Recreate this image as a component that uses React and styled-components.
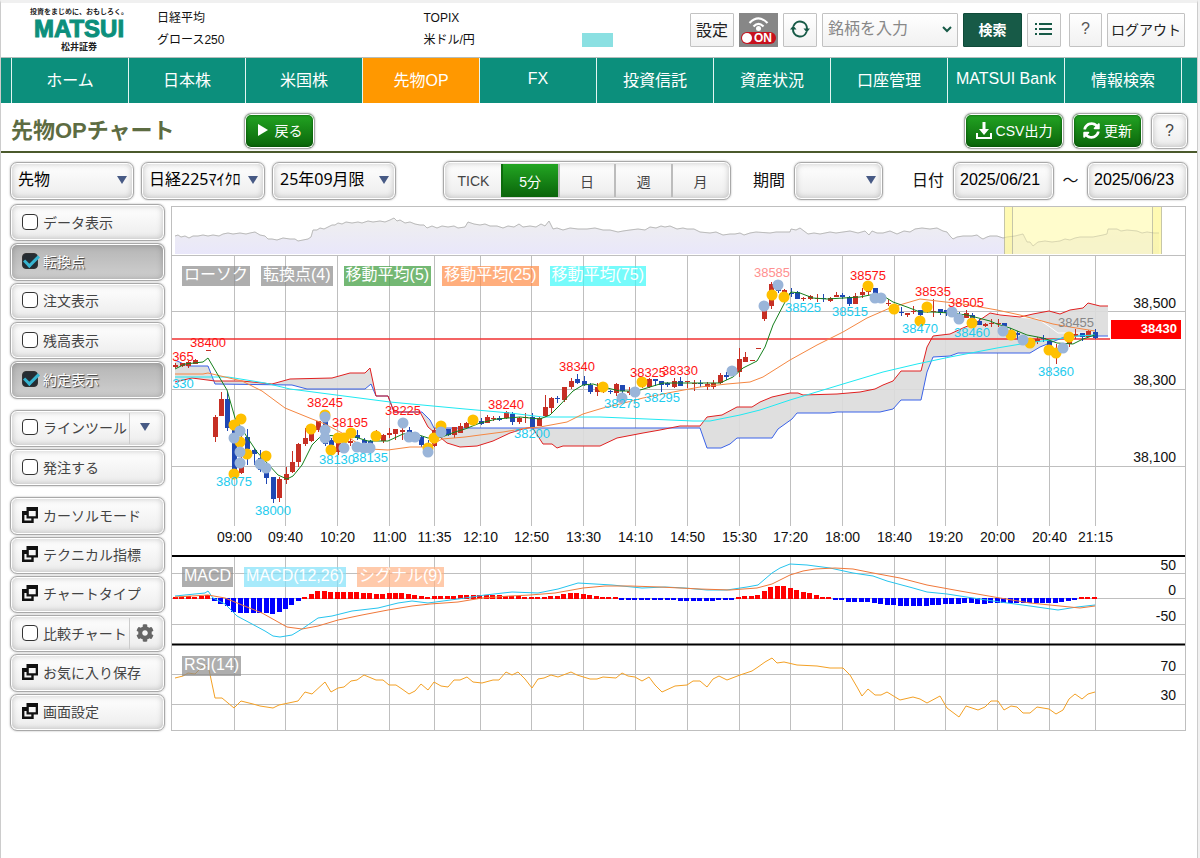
import React from 'react';
import styled, { createGlobalStyle, css } from 'styled-components';
import { FaCog, FaSyncAlt } from 'react-icons/fa';

const GREEN = '#0c8f7c';
const DARK_GREEN = '#175a47';
const FONT = `"Liberation Sans", "Noto Sans CJK JP", sans-serif`;
const UI_FONT = `"Noto Sans", "Noto Sans CJK JP", sans-serif`;

const GlobalStyle = createGlobalStyle`
    * {
        box-sizing: border-box;
    }
    body {
        margin: 0;
        background: #f1f1f1;
        color: #111;
        font-family: ${FONT};
    }
    button, input, select {
        margin: 0;
        font-family: inherit;
    }
    button, label, select {
        cursor: pointer;
    }
`;

const Page = styled.div`
    min-height: 100vh;
    margin-right: 2px;
    border: 1px solid #ccc;
    border-width: 3px 1px 0;
    border-top-color: #f0f0f0;
    background: #fff;
`;

/* ---------- header ---------- */

const HeaderSt = styled.header`
    height: 54px;
    padding: 0 12px 0 29px;
    display: flex;
    align-items: center;
`;

const Logo = styled.a`
    width: 98px;
    margin-right: 29px;
    display: flex;
    flex-direction: column;
    align-items: center;
    color: #222;
    text-decoration: none;
    white-space: nowrap;
    small {
        font-size: 7px;
        font-weight: bold;
        line-height: 8px;
    }
    strong {
        font-size: 24px;
        line-height: 26px;
        color: ${GREEN};
        -webkit-text-stroke: 1px ${GREEN};
    }
    span {
        font-size: 9px;
        font-weight: bold;
        line-height: 10px;
    }
`;

const Quotes = styled.dl`
    flex: 1;
    margin: 0;
    padding-bottom: 2px;
    display: grid;
    grid-template-columns: 1fr 1fr;
    font-size: 12px;
    line-height: 22px;
    div {
        display: flex;
        align-items: center;
    }
    dt {
        width: 158px;
    }
    dd {
        margin: 0;
    }
`;

const Flash = styled.span`
    display: block;
    width: 31px;
    height: 14px;
    background: #8be0e2;
`;

const Actions = styled.div`
    display: flex;
    gap: 5px;
    color: #222;
`;

const boxStyle = css`
    height: 34px;
    border: 1px solid #c2c2c2;
    border-radius: 1px;
    background: linear-gradient(#fff, #f1f1f1);
    color: #222;
`;

const FlatButton = styled.button`
    ${boxStyle}
    width: ${({ $width }) => $width}px;
    padding: 0 0 2px;
    display: flex;
    justify-content: center;
    align-items: center;
    font-size: ${({ $size }) => $size || 16}px;
    white-space: nowrap;
    ${({ $dark }) =>
        $dark &&
        css`
            border-color: #0f4a39;
            background: ${DARK_GREEN};
            color: #fff;
            font-weight: bold;
        `}
    ${({ $plain }) =>
        $plain &&
        css`
            padding: 0;
            border: none;
            background: none;
        `}
`;

const Search = styled.label`
    ${boxStyle}
    width: 136px;
    padding: 0 5px 2px;
    display: flex;
    align-items: center;
    input {
        flex: 1;
        min-width: 0;
        padding: 0;
        border: none;
        outline: none;
        background: none;
        font-size: 16px;
        &::placeholder {
            color: #888;
        }
    }
`;

const HelpButton = styled(FlatButton)`
    margin-left: 3px;
    color: #555;
`;

/* ---------- navigation ---------- */

const Navbar = styled.nav`
    height: 46px;
    padding: 0 15px 0 10px;
    display: flex;
    border-top: 1px solid #b5bdbb;
    background: ${GREEN};
`;

const NavItem = styled.a`
    flex: 1;
    padding-bottom: 4px;
    border-left: 1px solid #e4f5f2;
    display: flex;
    justify-content: center;
    align-items: center;
    background: ${({ $active }) => ($active ? '#ff9800' : GREEN)};
    color: #fff;
    font-size: 16px;
    text-decoration: none;
    white-space: nowrap;
    &:last-child {
        border-right: 1px solid #e4f5f2;
    }
`;

/* ---------- title bar ---------- */

const TitleBar = styled.div`
    height: 50px;
    padding: 10px 9px 0 10px;
    display: flex;
    align-items: flex-start;
    gap: 8px;
    border-bottom: 2px solid #4b5a2c;
    h1 {
        width: 225px;
        margin: 0;
        color: #5d6c42;
        font-size: 22px;
        line-height: 36px;
    }
`;

const Spacer = styled.div`
    flex: 1;
`;

const raised = css`
    border: 1px solid #a9a9a9;
    border-radius: 7px;
    background: linear-gradient(#fff, #ececec);
    box-shadow: inset 0 0 0 1px #fff, inset 0 0 6px 1px rgba(0, 0, 0, 0.22), 0 0 2px #aaa;
`;

const GreenButton = styled.button`
    height: 36px;
    width: ${({ $width }) => $width}px;
    padding: 0 0 2px;
    display: flex;
    justify-content: center;
    align-items: center;
    gap: 4px;
    border: 1px solid #a9a9a9;
    border-radius: 7px;
    background: linear-gradient(#23a523, #0a640a);
    box-shadow: inset 0 0 0 1px #fff, inset 0 0 2px 2px rgba(0, 60, 0, 0.4), 0 0 2px #aaa;
    color: #fff;
    font-size: 14px;
    white-space: nowrap;
`;

const GrayButton = styled.button`
    ${raised}
    width: 37px;
    height: 36px;
    padding: 0;
    color: #444;
    font-size: 16px;
`;

/* ---------- chart conditions ---------- */

const Conditions = styled.form`
    padding: 8px 9px 0;
    display: flex;
    align-items: center;
    font-family: ${UI_FONT};
    font-size: 16px;
`;

const SelectWrap = styled.span`
    position: relative;
    width: ${({ $width }) => $width}px;
    margin-right: 7px;
    select {
        ${raised}
        appearance: none;
        width: 100%;
        height: 38px;
        padding: 0 0 3px 7px;
        color: #000;
        font-size: 16px;
    }
`;

const Caret = styled.i`
    width: 0;
    height: 0;
    border: 5px solid transparent;
    border-top: 8px solid #475a85;
    border-bottom: none;
`;

const SelectCaret = styled(Caret)`
    position: absolute;
    right: 7px;
    top: 14px;
    pointer-events: none;
`;

const Segments = styled.div`
    ${raised}
    height: 39px;
    width: 288px;
    margin-left: 40px;
    padding: 2px;
    display: flex;
    overflow: hidden;
`;

const Segment = styled.button`
    flex: 1;
    padding: 0;
    border: none;
    border-left: 2px solid #bcbcbc;
    background: none;
    color: #444;
    font-family: ${FONT};
    font-size: 14px;
    &:first-child {
        border-left: none;
    }
    ${({ $active }) =>
        $active &&
        css`
            border-color: #0d6b0d;
            background: linear-gradient(#23a523, #0a640a);
            color: #fff;
        `}
`;

const Caption = styled.label`
    margin: 0 9px 0 ${({ $left }) => $left}px;
    padding-bottom: 3px;
`;

const DateInput = styled.input`
    ${raised}
    width: 101px;
    height: 38px;
    padding: 0 0 2px 6px;
    color: #000;
    font-family: ${FONT};
    font-size: 16px;
`;

const Tilde = styled.span`
    width: 33px;
    padding-bottom: 3px;
    text-align: center;
`;

/* ---------- side menu ---------- */

const Body = styled.main`
    padding: 4px 11px 0 9px;
    display: flex;
    gap: 6px;
`;

const Side = styled.aside`
    width: 155px;
    display: flex;
    flex-direction: column;
    gap: 2px;
`;

const SideRow = styled.div`
    ${raised}
    flex: 1;
    min-height: 34px;
    margin-top: ${({ $first }) => ($first ? 9 : 0)}px;
    display: flex;
    align-items: stretch;
    color: #444;
    font-family: ${UI_FONT};
    font-size: 14px;
    white-space: nowrap;
    ${({ $active }) =>
        $active &&
        css`
            background: linear-gradient(#b4b4b4, #d0d0d0);
            color: #fff;
            text-shadow: 1px 1px 1px #333;
        `}
`;

const Check = styled.label`
    flex: 1;
    padding: 0 0 2px 11px;
    display: flex;
    align-items: center;
    gap: 5px;
`;

const CheckInput = styled.input`
    appearance: none;
    width: 16px;
    height: 16px;
    border: 1px solid #333;
    border-radius: 4px;
    background: #fff;
    display: grid;
    place-items: center;
    &:checked {
        background: #252d33;
    }
    &:checked::after {
        content: '';
        width: 6px;
        height: 12px;
        border: solid #37b4d0;
        border-width: 0 3px 3px 0;
        transform: translate(1px, -2px) rotate(45deg);
    }
`;

const SideButton = styled.button`
    flex: 1;
    padding: 0 0 2px 11px;
    display: flex;
    align-items: center;
    gap: 5px;
    border: none;
    background: none;
    color: inherit;
    font-size: 14px;
`;

const SideExtra = styled.button`
    width: 35px;
    margin: 2px 0;
    padding: 0 4px 2px 0;
    display: flex;
    justify-content: center;
    align-items: center;
    border: none;
    border-left: 1px solid #ccc;
    background: none;
    color: #666;
`;

/* ---------- chart ---------- */

const ChartBox = styled.section`
    position: relative;
    flex: 1;
    min-width: 0;
    margin-top: 2px;
    svg {
        display: block;
        width: 100%;
    }
`;

const Legend = styled.div`
    position: absolute;
    left: 11px;
    top: ${({ $top }) => $top}px;
    display: flex;
    gap: 11px;
`;

const Chip = styled.span`
    height: 20px;
    padding: 0 2px;
    background: ${({ $color }) => $color};
    color: #fff;
    font-size: 16px;
    line-height: 18px;
`;

const navItems = ['ホーム', '日本株', '米国株', '先物OP', 'FX', '投資信託', '資産状況', '口座管理', 'MATSUI Bank', '情報検索'];

const sideItems = [
    { label: 'データ表示', check: true },
    { label: '転換点', check: true, on: true },
    { label: '注文表示', check: true },
    { label: '残高表示', check: true },
    { label: '約定表示', check: true, on: true },
    { label: 'ラインツール', check: true, first: true, extra: 'caret' },
    { label: '発注する', check: true },
    { label: 'カーソルモード', first: true },
    { label: 'テクニカル指標' },
    { label: 'チャートタイプ' },
    { label: '比較チャート', check: true, extra: 'gear' },
    { label: 'お気に入り保存' },
    { label: '画面設定' },
];

const times = [
    [234.5, '09:00'], [285.5, '09:40'], [337.5, '10:20'], [389.5, '11:00'], [434.5, '11:35'], [480.5, '12:10'],
    [531.5, '12:50'], [583.5, '13:30'], [635.5, '14:10'], [687.5, '14:50'], [739.5, '15:30'], [790.5, '17:20'],
    [842.5, '18:00'], [894.5, '18:40'], [945.5, '19:20'], [997.5, '20:00'], [1049.5, '20:40'], [1095.5, '21:15'],
];

const gridRows = [311.5, 389.5, 466.5, 573.5, 598.5, 624.5, 674.5, 704.5];

const scale = [
    [308, '38,500'], [385, '38,300'], [462, '38,100'],
    [570, '50'], [595, '0'], [621, '-50'], [671, '70'], [700, '30'],
];

const overview =
    '175,236 178,235 181,237 185,236 189,238 193,236 198,236 203,235 208,236 213,235 219,236 223,234 228,233 233,234 240,233 246,234 250,233 255,232 260,235 265,236 268,239 272,239 277,240 283,238 290,239 295,239 298,241 303,240 308,239 311,237 313,230 317,230 320,228 324,229 328,227 332,225 335,225 338,223 342,224 346,222 352,223 358,222 362,223 368,221 373,222 380,221 385,222 390,220 394,218 397,221 400,220 405,223 410,222 415,224 420,225 424,225 427,228 432,226 437,228 442,226 448,227 454,226 458,228 465,227 468,222 474,224 480,225 485,224 490,226 497,226 503,228 508,226 514,227 519,224 523,227 530,226 536,227 541,224 545,226 549,221 553,229 557,228 563,230 570,228 578,229 587,229 595,228 603,230 610,230 618,232 623,231 630,230 638,229 645,230 650,227 656,228 661,226 665,227 670,226 677,229 683,228 687,229 694,229 700,232 710,233 716,232 723,235 730,234 735,234 740,233 744,235 750,233 756,232 770,233 776,232 790,232 791,229 796,230 800,228 804,231 808,234 814,233 820,234 830,232 836,233 843,232 850,231 858,233 865,231 869,235 872,231 877,233 883,233 890,231 897,234 904,231 910,232 915,229 922,228 930,229 937,228 943,231 947,232 950,236 953,239 957,237 963,236 972,236 977,235 981,238 983,239 987,237 990,236 997,236 1003,238 1007,237 1015,236 1023,234 1027,242 1030,242 1033,246 1038,242 1045,241 1052,242 1060,241 1065,239 1070,240 1075,238 1080,237 1093,237 1103,235 1107,234 1108,229 1117,229 1121,231 1127,230 1137,231 1142,233 1147,232 1154,233 1159,233';

const ma5 =
    '175,369 185,364 203,362 208,358 215,370 227,390 235,418 247,437 257,452 268,464 278,475 287,479 293,476 302,465 312,445 322,435 338,436 355,437 368,441 388,441 403,434 413,433 428,438 442,437 455,432 465,429 480,423 497,419 520,417 540,419 550,415 560,405 573,391 583,385 593,384 603,387 620,391 637,391 650,387 663,383 687,383 707,383 720,383 733,377 743,368 753,363 757,361 765,347 773,325 785,302 791,292 800,293 813,298 827,299 860,297 870,295 885,297 893,302 907,307 920,312 933,312 950,313 967,315 990,321 997,324 1010,328 1027,335 1043,338 1057,343 1073,344 1083,339 1095,335';

const ma25 =
    '175,374 203,374 208,373 225,377 242,381 262,391 285,408 312,419 325,424 342,433 357,443 370,449 388,450 410,447 428,447 442,439 465,437 480,435 503,432 527,428 540,427 567,422 583,414 603,408 620,404 643,398 673,392 700,387 727,384 750,382 763,377 790,360 817,345 843,332 867,318 890,308 903,304 920,299 937,301 963,304 980,307 997,310 1020,315 1053,324 1070,327 1095,331';

const ma75 =
    '175,377 228,377 265,383 290,389 390,402 465,409 510,413 543,417 600,417 647,419 693,421 710,421 740,415 760,410 790,400 843,384 883,372 917,364 950,357 997,348 1027,343 1050,340 1077,336 1095,335';

const spanA =
    '175,382 192,378 215,381 242,381 272,384 290,379 332,378 350,373 365,373 370,368 376,396 388,396 394,412 420,412 428,427 435,433 447,443 460,447 477,446 493,441 510,433 523,429 532,427 543,444 552,444 557,448 563,446 600,446 617,438 643,433 660,430 680,426 700,426 707,417 722,415 737,407 752,407 760,402 772,397 790,393 798,393 803,395 837,394 860,392 875,389 883,385 893,381 901,371 921,371 927,347 933,336 950,334 963,328 977,322 990,313 1000,315 1020,317 1033,314 1049,311 1060,314 1070,310 1083,308 1088,303 1100,306 1108,306';

const spanB =
    '175,360 188,366 208,366 215,384 292,385 307,389 365,389 371,384 376,396 388,396 394,412 422,412 430,420 434,428 465,428 700,428 707,448 721,448 730,444 737,438 772,438 778,429 792,419 797,413 830,413 837,412 880,412 893,409 901,400 921,400 927,372 933,357 950,356 958,353 1030,353 1040,347 1057,340 1067,336 1108,336';

const macdLine =
    '175,596 205,593 208,591 213,598 225,604 237,616 252,624 265,631 273,636 280,637 292,635 302,629 318,618 332,616 352,611 378,608 398,603 412,601 428,603 458,599 485,595 512,592 538,593 558,589 578,583 595,584 612,585 642,588 665,587 685,588 707,590 727,590 747,587 758,585 772,573 780,568 790,564 807,565 830,568 853,573 873,576 887,581 913,588 927,592 947,594 973,598 1000,602 1030,606 1058,610 1077,607 1095,605';

const signalLine =
    '175,597 208,595 225,598 242,605 262,613 287,627 302,629 318,626 338,620 362,615 388,610 412,606 430,604 458,602 482,598 510,596 530,595 555,593 572,590 583,588 605,586 630,586 660,587 700,589 730,590 757,588 772,584 790,575 803,571 815,569 835,568 853,569 873,573 900,578 927,585 960,591 1000,598 1030,603 1060,606 1080,608 1095,606';

const rsiLine =
    '175,678 183,676 188,673 195,674 202,667 208,665 215,698 222,698 234,708 241,701 253,704 260,706 273,708 279,705 298,701 305,692 312,694 325,682 331,692 338,688 344,687 351,681 357,680 364,675 376,680 383,680 389,685 396,685 402,689 409,694 415,691 421,684 428,690 434,682 441,686 448,687 454,680 460,680 467,677 473,682 482,683 493,680 499,680 506,672 512,675 518,672 525,679 532,688 538,679 544,678 551,675 558,677 571,672 577,675 590,679 597,679 603,677 616,678 622,673 628,676 635,677 642,681 649,677 655,685 662,692 675,686 687,685 693,681 700,681 707,687 713,679 719,676 727,680 740,675 752,671 758,667 765,662 772,658 777,663 784,662 797,665 817,666 830,668 843,668 850,675 857,687 862,696 868,689 875,695 881,695 887,692 900,700 913,697 920,699 927,703 940,696 947,708 959,717 966,706 978,710 985,707 991,701 998,701 1004,710 1011,706 1017,707 1023,713 1030,713 1037,707 1049,709 1056,714 1063,710 1069,699 1075,694 1082,699 1088,694 1095,692';

// x, high, body top, body bottom, low, rising
const candles = [
    [175, 363, 365, 367, 368, 1], [182, 363, 363, 366, 367, 1], [188, 361, 362, 366, 368, 1], [195, 359, 360, 364, 364, 1],
    [208, 350, 350, 351, 351, 1], [215, 415, 417, 437, 442, 1], [221, 392, 399, 416, 416, 1], [227, 392, 399, 428, 431, 0],
    [234, 420, 424, 472, 475, 0], [241, 432, 465, 473, 474, 1], [247, 429, 437, 449, 465, 0], [254, 448, 450, 454, 465, 0],
    [260, 450, 458, 470, 472, 0], [266, 462, 467, 478, 484, 0], [273, 477, 477, 499, 503, 0], [279, 477, 479, 498, 502, 1],
    [286, 467, 474, 480, 484, 1], [292, 451, 462, 472, 473, 1], [298, 443, 444, 462, 467, 1], [305, 428, 438, 444, 446, 1],
    [311, 430, 433, 441, 442, 1], [318, 421, 421, 430, 432, 1], [325, 413, 418, 444, 446, 0], [331, 438, 440, 445, 447, 0],
    [338, 442, 443, 452, 455, 1], [344, 440, 446, 449, 450, 1], [350, 434, 441, 443, 446, 1], [357, 430, 435, 438, 440, 0],
    [364, 438, 440, 443, 446, 0], [370, 440, 441, 444, 446, 0], [376, 430, 434, 440, 441, 1], [383, 434, 435, 441, 443, 1],
    [389, 428, 433, 435, 438, 1], [395, 429, 429, 434, 440, 1], [402, 425, 430, 432, 440, 1], [409, 427, 430, 434, 435, 0],
    [415, 433, 435, 438, 440, 0], [421, 436, 437, 445, 447, 0], [428, 440, 445, 450, 452, 0], [434, 428, 430, 446, 447, 1],
    [441, 428, 430, 434, 435, 0], [448, 429, 429, 435, 436, 0], [454, 427, 427, 435, 438, 1], [460, 423, 426, 433, 433, 1],
    [466, 422, 423, 428, 428, 1], [474, 418, 420, 423, 424, 0], [481, 418, 421, 424, 425, 0], [487, 415, 417, 423, 423, 1],
    [493, 416, 418, 419, 421, 1], [499, 416, 418, 420, 421, 0], [506, 411, 412, 418, 419, 1], [512, 412, 414, 422, 425, 0],
    [519, 417, 418, 422, 424, 1], [525, 413, 417, 418, 423, 1], [532, 413, 417, 428, 428, 0], [539, 417, 418, 426, 426, 1],
    [545, 395, 407, 416, 417, 1], [551, 397, 398, 408, 413, 1], [557, 396, 398, 399, 403, 0], [564, 387, 387, 400, 402, 1],
    [571, 378, 381, 387, 389, 1], [577, 374, 379, 383, 384, 0], [584, 376, 381, 385, 386, 0], [590, 383, 385, 392, 394, 0],
    [597, 383, 387, 392, 396, 1], [603, 386, 388, 391, 393, 1], [610, 390, 391, 392, 394, 0], [616, 383, 384, 393, 396, 1],
    [622, 385, 385, 391, 394, 0], [629, 387, 391, 393, 395, 1], [635, 388, 389, 393, 395, 0], [642, 380, 382, 386, 388, 1],
    [649, 378, 379, 387, 388, 1], [655, 379, 379, 381, 386, 0], [661, 381, 381, 385, 392, 0], [667, 382, 383, 385, 387, 0],
    [674, 378, 381, 387, 388, 1], [680, 377, 381, 386, 386, 0], [687, 381, 381, 382, 388, 1], [694, 380, 383, 384, 391, 1],
    [700, 380, 383, 384, 387, 0], [707, 382, 384, 387, 390, 1], [713, 380, 383, 387, 389, 1], [720, 373, 375, 383, 384, 1],
    [726, 372, 375, 377, 380, 0], [732, 367, 369, 373, 375, 0], [739, 348, 359, 372, 377, 1], [745, 352, 357, 362, 362, 1],
    [752, 360, 360, 361, 361, 1], [758, 348, 348, 349, 349, 1], [764, 306, 309, 319, 321, 1], [771, 282, 284, 306, 309, 1],
    [778, 282, 284, 291, 293, 0], [784, 289, 290, 293, 295, 1], [791, 288, 293, 294, 297, 0], [797, 291, 292, 299, 299, 0],
    [803, 297, 298, 299, 301, 1], [810, 295, 296, 299, 300, 1], [817, 294, 298, 299, 302, 1], [823, 294, 298, 299, 302, 0],
    [830, 297, 298, 301, 302, 1], [836, 292, 295, 297, 297, 1], [842, 293, 295, 297, 299, 0], [849, 296, 297, 304, 306, 0],
    [855, 293, 296, 304, 304, 1], [862, 288, 292, 295, 298, 1], [868, 285, 287, 292, 295, 1], [875, 288, 288, 294, 296, 0],
    [881, 294, 296, 300, 301, 0], [888, 299, 303, 304, 306, 1], [894, 304, 306, 311, 312, 0], [901, 307, 312, 313, 316, 0],
    [907, 313, 313, 315, 317, 1], [913, 306, 311, 312, 314, 1], [920, 310, 310, 315, 320, 0], [927, 304, 306, 312, 313, 1],
    [933, 299, 311, 312, 317, 1], [940, 309, 309, 313, 315, 0], [946, 310, 310, 313, 316, 0], [952, 309, 311, 315, 317, 0],
    [959, 312, 314, 319, 321, 0], [966, 310, 313, 318, 318, 1], [972, 313, 315, 322, 324, 0], [979, 319, 321, 325, 325, 0],
    [985, 323, 324, 326, 327, 1], [991, 319, 323, 324, 327, 1], [998, 319, 323, 324, 327, 1], [1004, 323, 323, 326, 328, 0],
    [1010, 328, 331, 336, 338, 0], [1017, 331, 333, 335, 340, 0], [1023, 335, 337, 341, 343, 0], [1030, 339, 341, 345, 346, 1],
    [1037, 337, 339, 342, 344, 1], [1043, 335, 338, 339, 342, 0], [1049, 341, 341, 346, 349, 0], [1056, 344, 348, 352, 364, 1],
    [1063, 343, 345, 349, 352, 0], [1069, 335, 341, 344, 347, 1], [1075, 329, 334, 336, 339, 1], [1082, 333, 333, 337, 341, 0],
    [1088, 330, 331, 337, 337, 1], [1095, 329, 332, 338, 339, 0],
];

const goldDots = [
    [234, 425], [241, 419], [240, 442], [247, 454], [266, 456], [234, 474], [311, 429], [325, 415], [331, 450], [338, 438],
    [344, 438], [351, 433], [376, 436], [428, 448], [434, 438], [441, 426], [473, 420], [603, 387], [642, 382], [772, 295],
    [784, 297], [868, 286], [894, 309], [920, 321], [927, 307], [972, 323], [1011, 335], [1030, 343], [1049, 350],
    [1056, 353], [1069, 337],
];

const blueDots = [
    [240, 431], [234, 438], [240, 452], [240, 463], [260, 464], [266, 468], [325, 417], [325, 430], [325, 438], [344, 448],
    [357, 447], [364, 448], [370, 448], [403, 423], [409, 437], [415, 437], [428, 452], [441, 432], [622, 398], [635, 392],
    [732, 371], [764, 306], [778, 285], [875, 298], [881, 298], [952, 312], [959, 319], [1003, 331], [1023, 340], [1063, 348],
];

const RED = '#ff1414';
const SKY = '#1ecbee';
const pivots = [
    [183, 361, '365', RED], [208, 347, '38400', RED], [325, 407, '38245', RED], [350, 427, '38195', RED],
    [403, 415, '38225', RED], [506, 409, '38240', RED], [577, 371, '38340', RED], [648, 377, '38325', RED],
    [680, 375, '38330', RED], [772, 277, '38585', '#ff9090'], [868, 280, '38575', RED], [933, 296, '38535', RED],
    [966, 307, '38505', RED], [1076, 327, '38455', '#888'], [183, 388, '330', SKY], [234, 486, '38075', SKY],
    [273, 515, '38000', SKY], [337, 464, '38130', SKY], [370, 462, '38135', SKY], [532, 438, '38200', SKY],
    [622, 408, '38275', SKY], [662, 402, '38295', SKY], [803, 312, '38525', SKY], [850, 316, '38515', SKY],
    [920, 333, '38470', SKY], [972, 337, '38460', SKY], [1056, 376, '38360', SKY],
];

const repeat = (value, count) => Array(count).fill(value);
const histogram = [
    2, 2, 3, 2, 3, 4, -3, -6, -8, -14, ...repeat(-15, 5), -16, -14, -11, -7, -3, 2, 5, 8, 8, ...repeat(7, 5), 6, 6, 5, 5, 6, 6,
    6, 5, 4, 3, 2, ...repeat(3, 4), ...repeat(4, 7), 3, 3, 3, ...repeat(2, 4), 3, 3, 5, 6, 6, 5, 4, 3, 2, 2, 2,
    ...repeat(-2, 9), ...repeat(-3, 6), -2, -2, -2, 2, 3, 3, 4, 8, 12, 13, 13, 11, 9, 7, 6, 4, 2, 2, -2, -2,
    ...repeat(-4, 4), -5, -6, -7, -7, ...repeat(-8, 5), -7, -7, -6, -6, -6, -5, -5, -6, -6, ...repeat(-5, 11), -4, -3, -2,
    2, 2, 2,
];

const reversed = (points) => points.split(' ').reverse().join(' ');

const Chart = () => (
    <svg viewBox="171 206 1015 525" fontFamily="Liberation Sans, sans-serif" role="img" aria-label="日経225マイクロ 5分足">
        <defs>
            <linearGradient id="overviewFill" x1="0" y1="0" x2="0" y2="1">
                <stop offset="0" stopColor="#efefef" />
                <stop offset="1" stopColor="#e9e7fa" />
            </linearGradient>
            <clipPath id="plot">
                <rect x="172" y="207" width="1013" height="523" />
            </clipPath>
        </defs>

        <polygon points={`175,254 ${overview} 1159,254`} fill="url(#overviewFill)" />
        <polyline points={overview} fill="none" stroke="#c4c4c4" />
        <g opacity="0.75">
            <rect x="1004" y="207" width="157" height="47" fill="#fffab0" opacity="0.85" />
            <rect x="1004" y="207" width="8" height="47" fill="#fff99a" />
            <rect x="1152" y="207" width="9" height="47" fill="#fff99a" />
            <path d="M1004.5 207v47M1012.5 207v47M1152.5 207v47M1161.5 207v47" stroke="#b4b48c" />
        </g>
        <polyline points={overview} fill="none" stroke="#999" opacity="0.2" />

        <g stroke="#bfbfbf">
            {times.map(([x]) => (
                <path key={x} d={`M${x} 256V526M${x} 557V730`} />
            ))}
            {gridRows.map((y) => (
                <path key={y} d={`M172 ${y}H1185`} />
            ))}
            <path d="M171 255.5H1186" />
            <rect x="171.5" y="206.5" width="1014" height="524" fill="none" />
        </g>
        <path d="M172 556H1185M172 644.5H1185" stroke="#000" strokeWidth="2" />

        <g clipPath="url(#plot)" fill="none">
            <polygon points={`${spanA} ${reversed(spanB)}`} fill="#dcdcdc" fillOpacity="0.9" />
            <path d="M998 315L1038 319L1050 327L1058 333H1095" stroke="#fff" />
            <path d="M172 339H1110" stroke="#f03030" strokeWidth="1.5" />
            <polyline points={spanB} stroke="#3a62e8" />
            <polyline points={spanA} stroke="#e02020" />
            {candles.map(([x, high, top, bottom, low, up]) => (
                <g key={x} fill={up ? '#c62f24' : '#1f48b4'} stroke={up ? '#c62f24' : '#1f48b4'}>
                    <path d={`M${x + 0.5} ${high}V${low}`} />
                    <rect x={x - 2} y={top} width="5" height={Math.max(bottom - top, 1)} stroke="none" />
                </g>
            ))}
            <polyline points={ma75} stroke="#1fe9f2" />
            <polyline points={ma25} stroke="#f58742" />
            <polyline points={ma5} stroke="#15801c" />
            {goldDots.map(([x, y]) => (
                <circle key={`${x}-${y}`} cx={x} cy={y} r="5.5" fill="#ffc000" />
            ))}
            {blueDots.map(([x, y]) => (
                <circle key={`${x}-${y}`} cx={x} cy={y} r="5.5" fill="#9ab5d9" />
            ))}
            <g fontSize="13" textAnchor="middle">
                {pivots.map(([x, y, text, color]) => (
                    <text key={text} x={x} y={y} fill={color}>
                        {text}
                    </text>
                ))}
            </g>

            {histogram.map((value, i) => (
                <rect
                    key={i}
                    x={Math.round(173 + i * 6.47)}
                    y={value > 0 ? 599 - value : 598}
                    width="5"
                    height={Math.abs(value)}
                    fill={value > 0 ? '#f00' : '#00f'}
                />
            ))}
            <polyline points={macdLine} stroke="#25c4ee" />
            <polyline points={signalLine} stroke="#f0783a" />
            <polyline points={rsiLine} stroke="#f3a024" />
        </g>

        <g fontSize="14" fill="#111">
            {times.map(([x, text]) => (
                <text key={text} x={x} y="542" textAnchor="middle">
                    {text}
                </text>
            ))}
            {scale.map(([y, text]) => (
                <text key={text} x="1176" y={y} textAnchor="end">
                    {text}
                </text>
            ))}
        </g>
        <rect x="1111" y="320" width="70" height="19" fill="#f00" />
        <text x="1177" y="333" textAnchor="end" fontSize="13" fontWeight="bold" fill="#fff">
            38430
        </text>
    </svg>
);

const LiveIcon = () => (
    <svg width="39" height="34" viewBox="0 0 39 34">
        <rect width="39" height="34" fill="#878787" />
        <path d="M10.500 10Q19.500 1 28.500 10M14.500 13.500Q19.500 8.500 24.500 13.500" fill="none" stroke="#fff" strokeWidth="2.200" />
        <circle cx="19.500" cy="15.500" r="2.500" fill="#fff" />
        <rect x="2" y="19" width="35" height="12" rx="6" fill="#c8101c" />
        <circle cx="8" cy="25" r="5" fill="#fff" />
        <text x="15" y="29" fontFamily="Liberation Sans" fontWeight="bold" fontSize="12" fill="#fff">
            ON
        </text>
    </svg>
);

const ReloadIcon = () => (
    <svg width="20" height="20" viewBox="0 0 20 20">
        <path
            d="M3.500 7A7 7 0 0 1 17 10M16.500 13A7 7 0 0 1 3 10"
            fill="none"
            stroke={DARK_GREEN}
            strokeWidth="2"
        />
        <path d="M13.500 9.500h6.500l-3.250 4zM0 10.500h6.500l-3.250-4z" fill={DARK_GREEN} />
    </svg>
);

const ListIcon = () => (
    <svg width="18" height="14" viewBox="0 0 18 14">
        <path d="M0 2h2M0 7h2M0 12h2M4 2h13M4 7h13M4 12h13" stroke={DARK_GREEN} strokeWidth="2" />
    </svg>
);

const ChevronIcon = () => (
    <svg width="10" height="8" viewBox="0 0 10 8">
        <path d="M1 2l4 4 4-4" fill="none" stroke={DARK_GREEN} strokeWidth="2" />
    </svg>
);

const PlayIcon = () => (
    <svg width="14" height="14" viewBox="0 0 14 14">
        <path d="M1 1l10 6-10 6z" fill="#fff" />
    </svg>
);

const DownloadIcon = () => (
    <svg width="16" height="17" viewBox="0 0 16 17">
        <path d="M6.500 0h3v7h3.500l-5 6-5-6h3.500z" fill="#fff" />
        <path d="M1 11v5h14v-5" fill="none" stroke="#fff" strokeWidth="2" />
    </svg>
);

const WindowsIcon = () => (
    <svg width="16" height="16" viewBox="0 0 16 16">
        <path d="M5 5.500H1.200V14.800H10.500V11" fill="none" stroke="#111" strokeWidth="2.400" />
        <path d="M0 4h5v4H0z" fill="#111" />
        <path d="M4.500 0H16v11.500H4.500zM6.800 4v5.200h6.900V4z" fill="#111" fillRule="evenodd" />
    </svg>
);

const Header = () => (
    <HeaderSt>
        <Logo href="#home">
            <small>投資をまじめに、おもしろく。</small>
            <strong>MATSUI</strong>
            <span>松井証券</span>
        </Logo>
        <Quotes>
            <div>
                <dt>日経平均</dt>
            </div>
            <div>
                <dt>TOPIX</dt>
            </div>
            <div>
                <dt>グロース250</dt>
            </div>
            <div>
                <dt>米ドル/円</dt>
                <dd>
                    <Flash />
                </dd>
            </div>
        </Quotes>
        <Actions>
            <FlatButton $width={44}>設定</FlatButton>
            <FlatButton $width={39} $plain aria-label="自動更新">
                <LiveIcon />
            </FlatButton>
            <FlatButton $width={34} aria-label="更新">
                <ReloadIcon />
            </FlatButton>
            <Search>
                <input type="text" placeholder="銘柄を入力" aria-label="銘柄" />
                <ChevronIcon />
            </Search>
            <FlatButton $width={59} $size={14} $dark>
                検索
            </FlatButton>
            <FlatButton $width={34} aria-label="メニュー">
                <ListIcon />
            </FlatButton>
            <HelpButton $width={33}>?</HelpButton>
            <FlatButton $width={78} $size={14}>
                ログアウト
            </FlatButton>
        </Actions>
    </HeaderSt>
);

const Select = ({ width, value, label, id }) => (
    <SelectWrap $width={width}>
        <select aria-label={label} id={id}>
            <option>{value}</option>
        </select>
        <SelectCaret />
    </SelectWrap>
);

const App = () => {
    return (
        <Page>
            <GlobalStyle />
            <Header />
            <Navbar>
                {navItems.map((item) => (
                    <NavItem key={item} href="#" $active={item === '先物OP'}>
                        {item}
                    </NavItem>
                ))}
            </Navbar>
            <TitleBar>
                <h1>先物OPチャート</h1>
                <GreenButton $width={71}>
                    <PlayIcon />
                    戻る
                </GreenButton>
                <Spacer />
                <GreenButton $width={100}>
                    <DownloadIcon />
                    CSV出力
                </GreenButton>
                <GreenButton $width={71}>
                    <FaSyncAlt size={17} />
                    更新
                </GreenButton>
                <GrayButton>?</GrayButton>
            </TitleBar>
            <Conditions>
                <Select width={124} value="先物" label="商品" />
                <Select width={124} value="日経225ﾏｲｸﾛ" label="銘柄" />
                <Select width={124} value="25年09月限" label="限月" />
                <Segments>
                    {['TICK', '5分', '日', '週', '月'].map((item) => (
                        <Segment key={item} type="button" $active={item === '5分'}>
                            {item}
                        </Segment>
                    ))}
                </Segments>
                <Caption htmlFor="term" $left={22}>
                    期間
                </Caption>
                <Select width={89} value="" id="term" />
                <Spacer />
                <Caption htmlFor="from" $left={0}>
                    日付
                </Caption>
                <DateInput id="from" defaultValue="2025/06/21" />
                <Tilde>～</Tilde>
                <DateInput aria-label="終了日" defaultValue="2025/06/23" />
            </Conditions>
            <Body>
                <Side>
                    {sideItems.map(({ label, check, on, first, extra }) => (
                        <SideRow key={label} $active={on} $first={first}>
                            {check ? (
                                <Check>
                                    <CheckInput type="checkbox" defaultChecked={on} />
                                    {label}
                                </Check>
                            ) : (
                                <SideButton>
                                    <WindowsIcon />
                                    {label}
                                </SideButton>
                            )}
                            {extra && (
                                <SideExtra aria-label={`${label}の設定`}>
                                    {extra === 'gear' ? <FaCog size={18} /> : <Caret />}
                                </SideExtra>
                            )}
                        </SideRow>
                    ))}
                </Side>
                <ChartBox>
                    <Chart />
                    <Legend $top={60}>
                        <Chip $color="rgba(140, 140, 140, 0.7)">ローソク</Chip>
                        <Chip $color="rgba(140, 140, 140, 0.7)">転換点(4)</Chip>
                        <Chip $color="rgba(70, 160, 70, 0.75)">移動平均(5)</Chip>
                        <Chip $color="rgba(255, 140, 70, 0.7)">移動平均(25)</Chip>
                        <Chip $color="rgba(60, 250, 250, 0.7)">移動平均(75)</Chip>
                    </Legend>
                    <Legend $top={361}>
                        <Chip $color="rgba(140, 140, 140, 0.7)">MACD</Chip>
                        <Chip $color="rgba(130, 225, 250, 0.7)">MACD(12,26)</Chip>
                        <Chip $color="rgba(255, 180, 135, 0.7)">シグナル(9)</Chip>
                    </Legend>
                    <Legend $top={450}>
                        <Chip $color="rgba(140, 140, 140, 0.7)">RSI(14)</Chip>
                    </Legend>
                </ChartBox>
            </Body>
        </Page>
    );
};

export default App;
